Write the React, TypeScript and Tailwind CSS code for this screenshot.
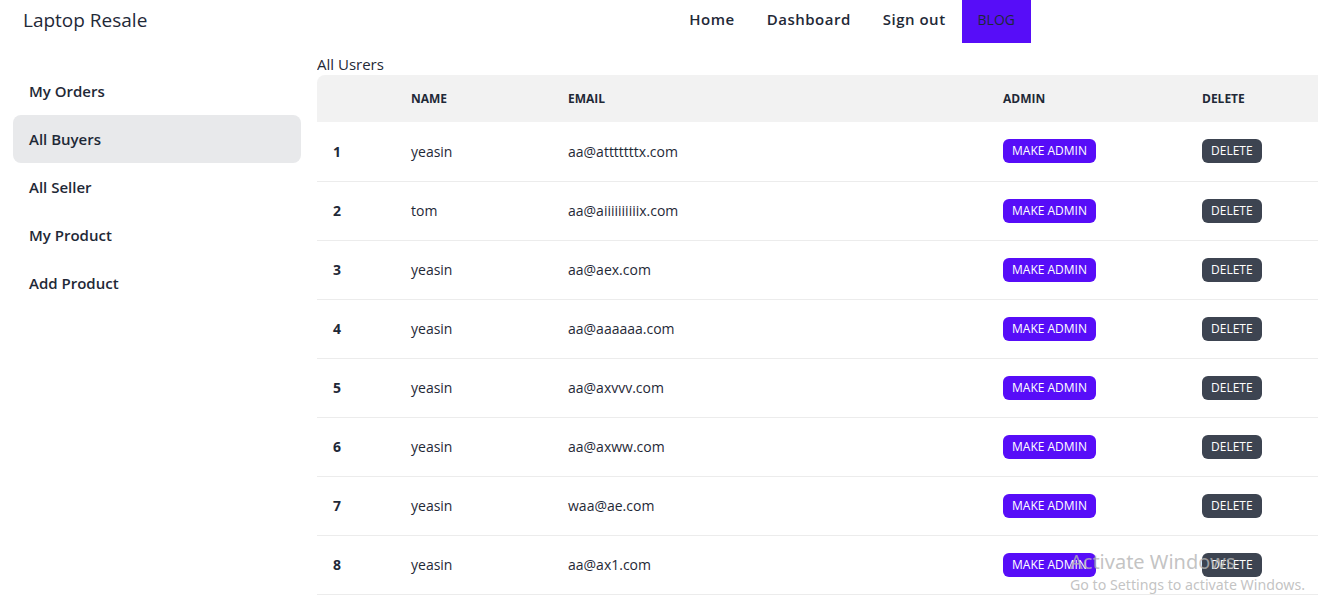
import React from 'react';

const users = [
  { name: 'yeasin', email: 'aa@atttttttx.com' },
  { name: 'tom', email: 'aa@aiiiiiiiiiix.com' },
  { name: 'yeasin', email: 'aa@aex.com' },
  { name: 'yeasin', email: 'aa@aaaaaa.com' },
  { name: 'yeasin', email: 'aa@axvvv.com' },
  { name: 'yeasin', email: 'aa@axww.com' },
  { name: 'yeasin', email: 'waa@ae.com' },
  { name: 'yeasin', email: 'aa@ax1.com' },
];

const menu = ['My Orders', 'All Buyers', 'All Seller', 'My Product', 'Add Product'];

const App: React.FC = () => {
  return (
    <div className="relative h-[601px] w-[1318px] overflow-hidden bg-white text-[#1f2937] font-['Open_Sans',sans-serif]">
      {/* Navbar */}
      <div className="flex h-[43px] items-center">
        <div className="pl-[23px] pb-[2px] text-[19px] leading-none">Laptop Resale</div>
        <div className="ml-auto mr-[287px] flex h-full items-center">
          <a className="px-4 pb-1 text-[15px] font-semibold tracking-[0.5px]">Home</a>
          <a className="px-4 pb-1 text-[15px] font-semibold tracking-[0.5px]">Dashboard</a>
          <a className="px-4 pb-1 text-[15px] font-semibold tracking-[0.5px]">Sign out</a>
          <a className="flex h-full items-center bg-[#570df8] px-4 pb-1 text-[14px]">BLOG</a>
        </div>
      </div>

      <div className="flex">
        {/* Sidebar */}
        <div className="w-[317px] shrink-0 pl-[13px] pr-4 pt-6">
          <ul className="flex flex-col">
            {menu.map((item) => (
              <li
                key={item}
                className={`flex h-12 items-center rounded-lg px-4 text-[15px] font-semibold ${
                  item === 'All Buyers' ? 'bg-[#e8e9eb]' : ''
                }`}
              >
                {item}
              </li>
            ))}
          </ul>
        </div>

        {/* Main */}
        <div className="flex-1 overflow-hidden pt-[10px]">
          <h2 className="text-[15px] leading-[22px]">All Usrers</h2>
          <table className="w-[1080px] table-fixed border-collapse text-left text-[14px]">
            <thead>
              <tr className="h-[47px] bg-[#f2f2f2] text-[12px] font-bold uppercase">
                <th className="w-[78px] rounded-tl-lg px-4"></th>
                <th className="w-[157px] px-4">Name</th>
                <th className="w-[435px] px-4">Email</th>
                <th className="w-[199px] px-4">Admin</th>
                <th className="px-4">Delete</th>
              </tr>
            </thead>
            <tbody>
              {users.map((u, i) => (
                <tr key={i} className="h-[59px] border-b border-[#ececec]">
                  <th className="px-4 font-bold">{i + 1}</th>
                  <td className="px-4">{u.name}</td>
                  <td className="px-4">{u.email}</td>
                  <td className="px-4">
                    <button className="h-6 rounded-md bg-[#570df8] px-[9px] text-[12px] text-white">
                      MAKE ADMIN
                    </button>
                  </td>
                  <td className="px-4">
                    <button className="h-6 rounded-md bg-[#3d4451] px-[9px] text-[12px] text-white">
                      DELETE
                    </button>
                  </td>
                </tr>
              ))}
            </tbody>
          </table>
        </div>
      </div>

      {/* OS watermark */}
      <div className="pointer-events-none absolute left-[1070px] top-[548px] font-['Noto_Sans',sans-serif] text-[#b4b4b4]/80">
        <div className="text-[20px] leading-[28px]">Activate Windows</div>
        <div className="text-[14.2px] leading-[18px]">Go to Settings to activate Windows.</div>
      </div>
    </div>
  );
};

export default App;
